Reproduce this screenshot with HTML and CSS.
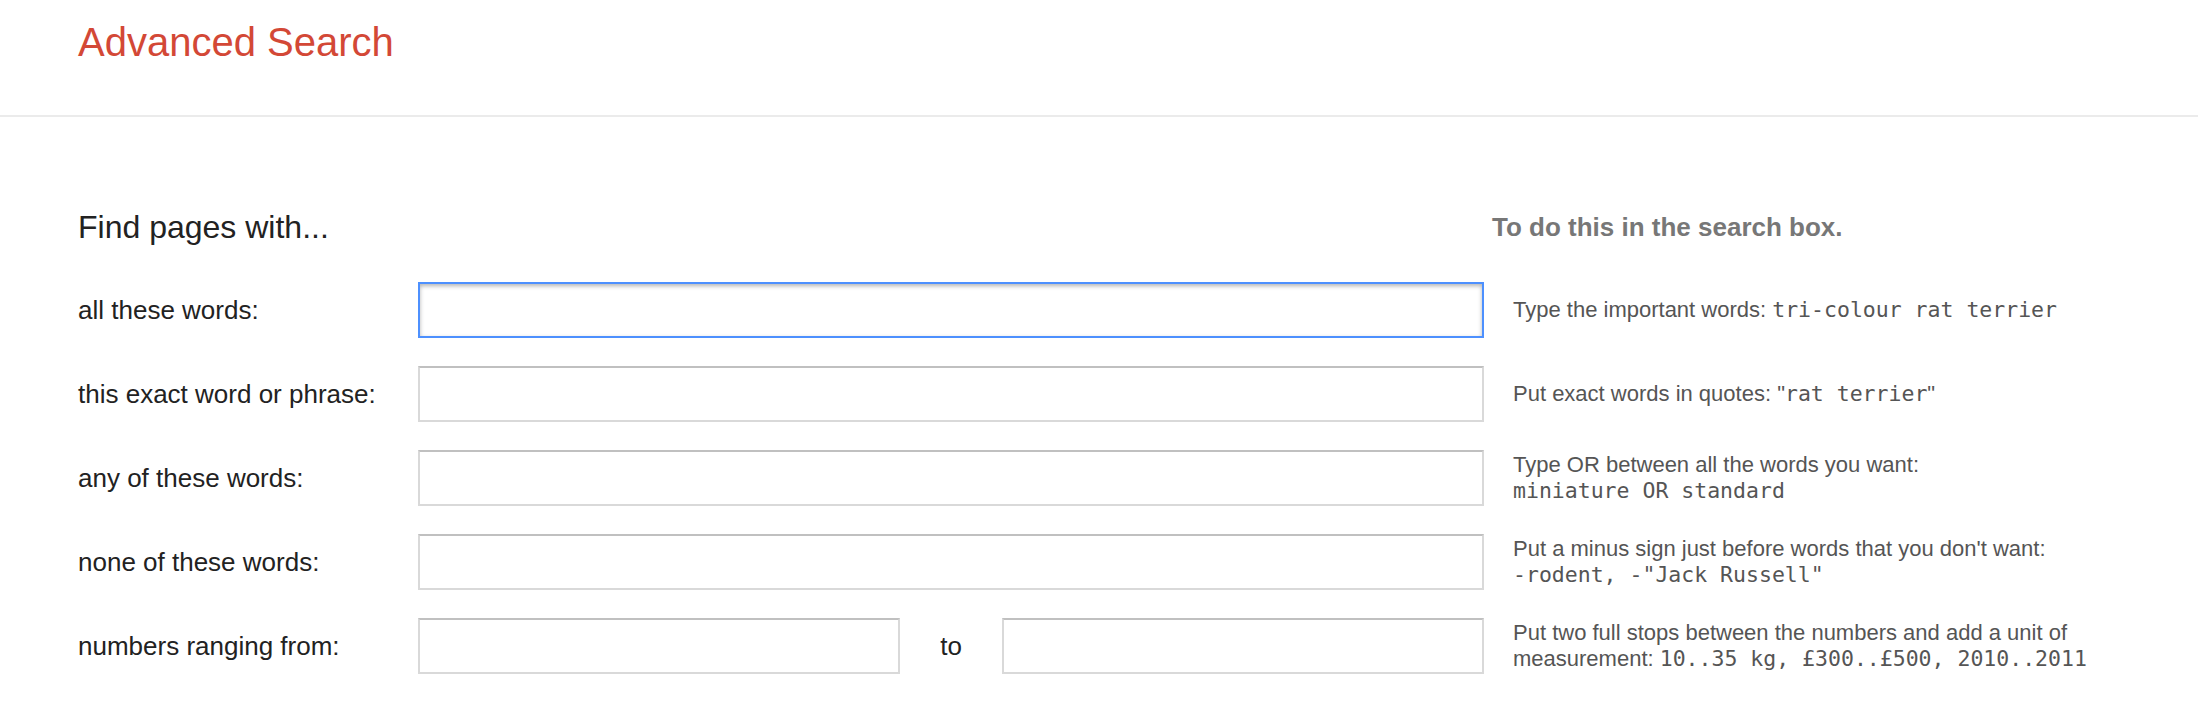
FILE: index.html
```html
<!DOCTYPE html>
<html lang="en">
<head>
<meta charset="utf-8">
<title>Advanced Search</title>
<link rel="stylesheet" href="styles.css">
</head>
<body>
<header class="topbar">
  <h1 class="title">Advanced Search</h1>
</header>
<main class="form">
  <div class="head-row">
    <h2 class="find">Find pages with...</h2>
    <h3 class="howto">To do this in the search box.</h3>
  </div>
  <div class="row">
    <label class="label">all these words:</label>
    <div class="field"><input class="box box-focus" type="text"></div>
    <div class="hint">Type the important words: <code class="ex">tri-colour rat terrier</code></div>
  </div>
  <div class="row">
    <label class="label">this exact word or phrase:</label>
    <div class="field"><input class="box" type="text"></div>
    <div class="hint">Put exact words in quotes: <span class="nowrap">"<code class="ex">rat terrier</code>"</span></div>
  </div>
  <div class="row">
    <label class="label">any of these words:</label>
    <div class="field"><input class="box" type="text"></div>
    <div class="hint">Type OR between all the words you want: <code class="ex">miniature OR standard</code></div>
  </div>
  <div class="row">
    <label class="label">none of these words:</label>
    <div class="field"><input class="box" type="text"></div>
    <div class="hint">Put a minus sign just before words that you don't want: <code class="ex">-rodent, -"Jack Russell"</code></div>
  </div>
  <div class="row">
    <label class="label">numbers ranging from:</label>
    <div class="field field-range">
      <input class="box box-half" type="text">
      <span class="to">to</span>
      <input class="box box-half" type="text">
    </div>
    <div class="hint"><span class="nowrap">Put two full stops between the numbers and add a unit of</span> <span class="nowrap">measurement: <code class="ex">10..35 kg, £300..£500, 2010..2011</code></span></div>
  </div>
</main>
</body>
</html>
```

FILE: styles.css
```css
html, body {
  margin: 0;
  padding: 0;
  background: #fff;
}

body {
  font-family: "Liberation Sans", Arial, Helvetica, sans-serif;
  color: #222;
}

.topbar {
  box-sizing: border-box;
  height: 117px;
  padding: 22px 0 0 78px;
  border-bottom: 2px solid #ebebeb;
}

.title {
  margin: 0;
  font-size: 40px;
  line-height: 40px;
  font-weight: normal;
  color: #d34836;
}

.form {
  padding: 94px 0 0 78px;
}

.head-row,
.row {
  display: grid;
  grid-template-columns: 340px 1066px 1fr;
}

.head-row {
  height: 32px;
  margin-bottom: 39px;
}

.find {
  grid-column: 1 / 3;
  margin: 0;
  font-size: 32px;
  line-height: 32px;
  font-weight: normal;
  color: #222;
}

.howto {
  margin: 3px 0 0 8px;
  font-size: 26px;
  line-height: 26px;
  font-weight: bold;
  color: #777;
}

.row {
  height: 56px;
  margin-bottom: 28px;
  align-items: center;
}

.label {
  font-size: 26px;
  line-height: 30px;
  color: #222;
}

.field {
  display: flex;
  align-items: center;
  height: 56px;
}

.box {
  box-sizing: border-box;
  -webkit-appearance: none;
  appearance: none;
  display: block;
  width: 1066px;
  height: 56px;
  margin: 0;
  padding: 0 16px;
  border: 2px solid #d9d9d9;
  border-top-color: #c0c0c0;
  border-radius: 0;
  background: #fff;
  outline: none;
  font-family: inherit;
  font-size: 26px;
}

.box-focus {
  border-color: #4d90fe;
  box-shadow: inset 0 2px 4px rgba(0, 0, 0, 0.3);
}

.box-half {
  width: 482px;
}

.to {
  flex: 1;
  text-align: center;
  font-size: 26px;
  line-height: 30px;
  color: #222;
}

.hint {
  max-width: 610px;
  padding-left: 29px;
  font-size: 22px;
  line-height: 26px;
  color: #555;
}

.ex {
  font-family: "DejaVu Sans Mono", "Liberation Mono", monospace;
  font-size: 21.5px;
  line-height: 24px;
  white-space: nowrap;
  color: #555;
}

.nowrap {
  white-space: nowrap;
}
```
